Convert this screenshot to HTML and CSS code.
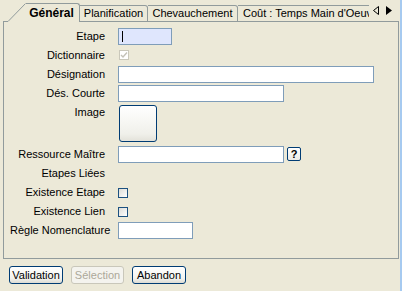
FILE: index.html
```html
<!DOCTYPE html>
<html lang="fr">
<head>
    <meta charset="UTF-8">
    <title>Etape</title>
    <link rel="stylesheet" href="styles.css">
</head>
<body>
    <div class="window">
        <div class="tabs">
            <div class="tab-lead"></div>
            <svg class="tab-slant" width="18" height="19" viewBox="0 0 18 19">
                <polygon points="0,19 18,0 18,19" fill="#ECE9D8"/>
                <line x1="0" y1="18.5" x2="17.5" y2="0.5" stroke="#919B9C" stroke-width="1"/>
            </svg>
            <div class="tab tab-active">Général</div>
            <div class="tab tab-plan">Planification</div>
            <div class="tab tab-chev">Chevauchement</div>
            <div class="tab tab-cout"><span>Coût : Temps Main d'Oeuv</span></div>
            <div class="tab-scroll">
                <svg width="8" height="9" viewBox="0 0 8 9">
                    <polygon points="6.5,0.5 6.5,8.5 1.5,4.5" fill="none" stroke="#000" stroke-width="1"/>
                </svg>
                <svg width="8" height="9" viewBox="0 0 8 9">
                    <polygon points="1,0 1,9 7,4.5" fill="#000"/>
                </svg>
            </div>
        </div>

        <div class="panel">
            <div class="form">
                <div class="label">Etape</div>
                <div class="field"><div class="input input-focus input-etape"><span class="caret"></span></div></div>

                <div class="label">Dictionnaire</div>
                <div class="field">
                    <div class="check check-disabled check-dict">
                        <svg width="8" height="8" viewBox="0 0 8 8">
                            <polyline points="1,4 3,6 7,1.5" fill="none" stroke="#C4C2B8" stroke-width="1.4"/>
                        </svg>
                    </div>
                </div>

                <div class="label">Désignation</div>
                <div class="field"><div class="input input-long"></div></div>

                <div class="label">Dés. Courte</div>
                <div class="field"><div class="input input-mid"></div></div>

                <div class="label">Image</div>
                <div class="field"><div class="image-btn"></div></div>

                <div class="label">Ressource Maître</div>
                <div class="field">
                    <div class="input input-mid"></div>
                    <div class="help-btn">?</div>
                </div>

                <div class="label">Etapes Liées</div>
                <div class="field"></div>

                <div class="label">Existence Etape</div>
                <div class="field"><div class="check"></div></div>

                <div class="label">Existence Lien</div>
                <div class="field"><div class="check"></div></div>

                <div class="label label-wide">Règle Nomenclature</div>
                <div class="field"><div class="input input-short"></div></div>
            </div>
        </div>

        <div class="actions">
            <div class="btn">Validation</div>
            <div class="btn btn-disabled">Sélection</div>
            <div class="btn">Abandon</div>
        </div>
    </div>
</body>
</html>
```

FILE: styles.css
```css
:root {
    --bg-color: #ECE9D8;
    --tab-border: #919B9C;
    --input-border: #7F9DB9;
    --btn-border: #003C74;
    --stripe: #A6CAF0;
}

* {
    margin: 0;
    padding: 0;
    box-sizing: border-box;
}

body {
    width: 402px;
    height: 291px;
    overflow: hidden;
    background-color: var(--bg-color);
    border-right: 2px solid var(--stripe);
    font-family: 'Liberation Sans', Arial, sans-serif;
    font-size: 11px;
    color: #000;
}

.window {
    width: 400px;
}

/* Tab strip */
.tabs {
    display: flex;
    align-items: flex-end;
    height: 22px;
    padding-left: 3px;
}

.tab-lead {
    width: 5px;
    height: 1px;
    background-color: var(--tab-border);
}

.tab-slant {
    display: block;
    flex-shrink: 0;
}

.tab {
    height: 17px;
    line-height: 15px;
    border-top: 1px solid var(--tab-border);
    border-right: 1px solid var(--tab-border);
    border-bottom: 1px solid var(--tab-border);
    border-top-right-radius: 3px;
    text-align: center;
    white-space: nowrap;
    flex-shrink: 0;
}

.tab-active {
    width: 54px;
    height: 19px;
    line-height: 19px;
    border-bottom: none;
    font-weight: bold;
    padding-right: 2px;
    font-size: 12px;
}

.tab-plan {
    width: 68px;
}

.tab-chev {
    width: 90px;
}

.tab-cout {
    width: 131px;
    overflow: hidden;
    text-align: left;
    padding-left: 5px;
    border-right: none;
    border-top-right-radius: 0;
}

.tab-scroll {
    flex: 1;
    height: 22px;
    display: flex;
    align-items: center;
    gap: 5px;
    padding-left: 3px;
    padding-bottom: 1px;
    border-bottom: 1px solid var(--tab-border);
    margin-right: 1px;
}

.tab-scroll svg {
    display: block;
}

/* Panel */
.panel {
    margin-left: 3px;
    width: 396px;
    height: 237px;
    border-left: 1px solid var(--tab-border);
    border-right: 1px solid var(--tab-border);
    border-bottom: 1px solid var(--tab-border);
    padding: 6px 0 0 6px;
}

.form {
    display: grid;
    grid-template-columns: 95px 1fr;
    grid-template-rows: 19px 19px 19px 19px 42px 19px 19px 19px 19px 19px;
    column-gap: 13px;
}

.label {
    line-height: 17px;
    text-align: right;
    white-space: nowrap;
}

.label-wide {
    text-align: left;
    margin-right: -6px;
}

.field {
    display: flex;
    align-items: flex-start;
}

.input {
    height: 17px;
    background-color: #fff;
    border: 1px solid var(--input-border);
}

.input-focus {
    background-color: #DFE6FD;
}

.input-etape {
    width: 54px;
}

.caret {
    display: block;
    width: 1px;
    height: 11px;
    margin: 2px 0 0 3px;
    background-color: #000;
}

.input-long {
    width: 256px;
}

.input-mid {
    width: 166px;
}

.input-short {
    width: 75px;
}

.check {
    width: 10px;
    height: 10px;
    margin-top: 4px;
    border: 1px solid #1C5180;
    background: linear-gradient(135deg, #DCDCD7, #fff);
    display: flex;
    align-items: center;
    justify-content: center;
}

.check-dict {
    margin: 3px 0 0 1px;
}

.check-disabled {
    border-color: #CAC8BB;
    background: #fff;
}

.check svg {
    display: block;
}

.image-btn {
    width: 38px;
    height: 37px;
    margin: 1px 0 0 1px;
    border: 1px solid var(--btn-border);
    border-radius: 3px;
    background: linear-gradient(180deg, #FFFFFF, #F0F0EA 80%, #E3E2DA);
}

.help-btn {
    width: 14px;
    height: 14px;
    margin: 1px 0 0 3px;
    border: 1px solid var(--btn-border);
    border-radius: 2px;
    background: linear-gradient(180deg, #FFFFFF, #ECEBE6);
    font-weight: bold;
    font-size: 11px;
    line-height: 12px;
    text-align: center;
}

/* Bottom buttons */
.actions {
    display: flex;
    gap: 8px;
    padding: 7px 0 0 9px;
}

.btn {
    width: 54px;
    height: 18px;
    line-height: 16px;
    border: 1px solid var(--btn-border);
    border-radius: 3px;
    background: linear-gradient(180deg, #FFFFFF, #F3F3EF 70%, #DCDBD3);
    text-align: center;
}

.btn-disabled {
    width: 53px;
    border-color: #C9C7BA;
    background: #F4F3EE;
    color: #ACA899;
}
```
